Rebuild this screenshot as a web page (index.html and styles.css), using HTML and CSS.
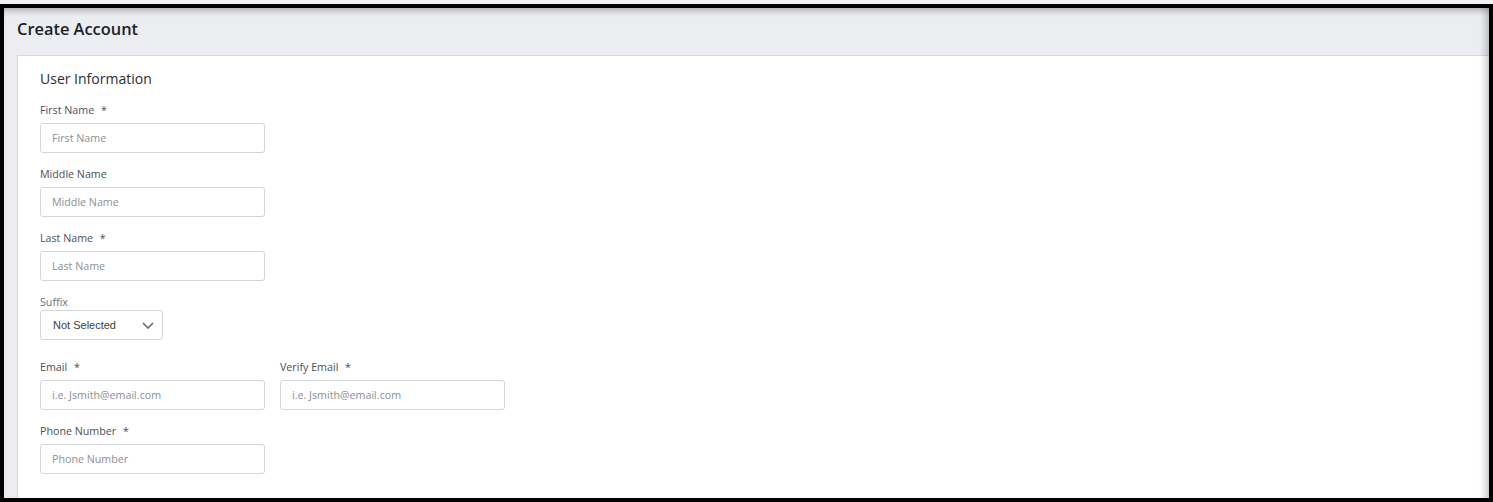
FILE: index.html
```html
<!DOCTYPE html>
<html lang="en">
<head>
  <meta charset="UTF-8">
  <meta name="viewport" content="width=device-width, initial-scale=1.0">
  <title>Create Account</title>
  <link rel="stylesheet" href="styles.css">
</head>
<body>
  <div class="frame">
    <div class="header">Create Account</div>

    <div class="panel">
      <h3>User Information</h3>

      <div class="field">
        <label for="firstName">First Name <span class="req">*</span></label>
        <input type="text" id="firstName" placeholder="First Name">
      </div>

      <div class="field">
        <label for="middleName">Middle Name</label>
        <input type="text" id="middleName" placeholder="Middle Name">
      </div>

      <div class="field">
        <label for="lastName">Last Name <span class="req">*</span></label>
        <input type="text" id="lastName" placeholder="Last Name">
      </div>

      <div class="field field-select">
        <label for="suffix">Suffix</label>
        <div class="select">
          <span>Not Selected</span>
          <svg width="12" height="7" viewBox="0 0 12 7">
            <path d="M1 1l5 5 5-5" fill="none" stroke="#666a70" stroke-width="1.6"/>
          </svg>
        </div>
      </div>

      <div class="row">
        <div class="field">
          <label for="email">Email <span class="req">*</span></label>
          <input type="text" id="email" placeholder="i.e. Jsmith@email.com">
        </div>
        <div class="field">
          <label for="verifyEmail">Verify Email <span class="req">*</span></label>
          <input type="text" id="verifyEmail" placeholder="i.e. Jsmith@email.com">
        </div>
      </div>

      <div class="field">
        <label for="phone">Phone Number <span class="req">*</span></label>
        <input type="text" id="phone" placeholder="Phone Number">
      </div>
    </div>
  </div>
</body>
</html>
```

FILE: styles.css
```css
* {
  box-sizing: border-box;
}
body {
  margin: 0;
  padding-top: 4px;
  background: #eef0f2;
  font-family: 'Open Sans', sans-serif;
  color: #333;
}
.frame {
  position: relative;
  width: 1493px;
  height: 498px;
  border: 4px solid #000;
  background: #ecedf0;
  overflow: hidden;
}
.frame::after {
  content: '';
  position: absolute;
  inset: 0;
  pointer-events: none;
  box-shadow: inset 0 7px 6px -4px rgba(0,0,0,0.25), inset -8px 0 6px -4px rgba(0,0,0,0.2);
}
.header {
  height: 47px;
  padding: 9px 0 0 13px;
  font-size: 16.4px;
  line-height: 24px;
  font-weight: 600;
  color: #1e2126;
}
.panel {
  margin-left: 13px;
  height: 100%;
  background: #fff;
  border-top: 1px solid #d6d8dc;
  border-left: 1px solid #d6d8dc;
  padding: 13px 22px;
}
h3 {
  margin: 0 0 13px;
  font-size: 14px;
  line-height: 20px;
  font-weight: 500;
  color: #2a2d33;
}
.field {
  margin-bottom: 13px;
}
label {
  display: block;
  font-size: 10.7px;
  line-height: 16px;
  color: #4b505a;
}
.req {
  margin-left: 4px;
}
input[type="text"] {
  display: block;
  width: 225px;
  height: 30px;
  margin-top: 5px;
  padding: 0 11px 1px;
  border: 1px solid #d2d5dc;
  border-radius: 3px;
  font-family: 'Open Sans', sans-serif;
  font-size: 10.7px;
  color: #333;
  outline: none;
}
input::placeholder {
  color: #8b909a;
}
.field-select {
  margin-bottom: 19px;
}
.field-select label {
  color: #6b707a;
}
.select {
  display: flex;
  align-items: center;
  justify-content: space-between;
  width: 123px;
  height: 30px;
  padding: 0 8px 0 12px;
  border: 1px solid #d2d5dc;
  border-radius: 3px;
  font-family: 'Liberation Sans', Arial, sans-serif;
  font-size: 11px;
  color: #3c3f44;
}
.row {
  display: flex;
  gap: 15px;
}
```
